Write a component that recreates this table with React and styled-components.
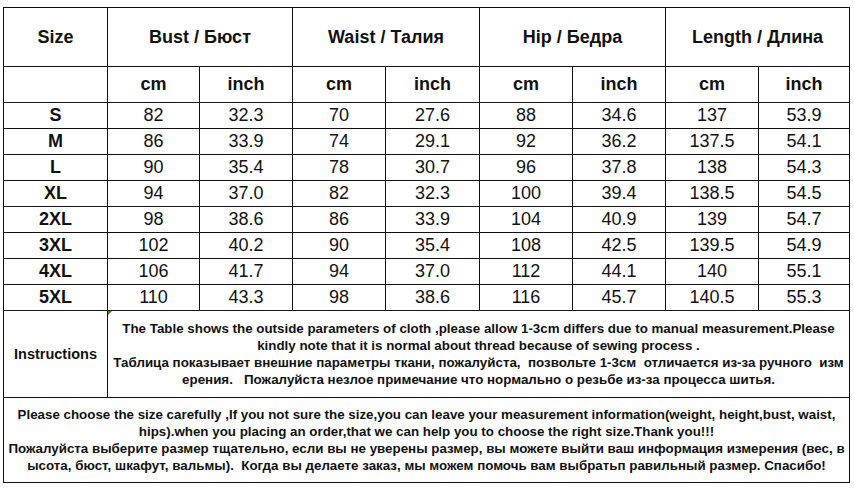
import React from "react";
import styled, { createGlobalStyle } from "styled-components";

const GlobalStyle = createGlobalStyle`
  html, body {
    margin: 0;
    padding: 0;
    background: #fff;
  }
  body {
    font-family: "Liberation Sans", Arial, sans-serif;
    color: #111;
  }
`;

const Page = styled.div`
  padding: 7px 4px 0 3px;
  width: 854px;
  box-sizing: border-box;
`;

const Chart = styled.div`
  display: grid;
  grid-template-columns: 104px 92px 93px 93px 94px 93px 93px 93px 91px;
  grid-template-rows: 59px 36px repeat(8, 26px) 87px 85px;
  border-top: 1px solid #111;
  border-left: 1px solid #111;
  width: max-content;
`;

const Cell = styled.div`
  grid-column: ${(p) => (p.$span ? `span ${p.$span}` : "auto")};
  border-right: 1px solid #111;
  border-bottom: 1px solid #111;
  display: flex;
  align-items: center;
  justify-content: center;
  position: relative;
  font-size: 18px;
  font-weight: ${(p) => (p.$bold ? 700 : 400)};
  white-space: nowrap;
  overflow: visible;
`;

const Label = styled(Cell)`
  font-size: 14.5px;
  font-weight: 700;
`;

const TextBlock = styled(Cell)`
  flex-direction: column;
  font-size: 13.35px;
  font-weight: 700;
  line-height: 17px;
  text-align: center;
`;

const Line = styled.div`
  white-space: pre;
`;

const Marker = styled.span`
  position: absolute;
  top: 0;
  left: 0;
  width: 0;
  height: 0;
  border-top: 4px solid #3a8a2a;
  border-right: 4px solid transparent;
`;

const groups = ["Bust / Бюст", "Waist / Талия", "Hip / Бедра", "Length / Длина"];

const rows = [
  ["S", "82", "32.3", "70", "27.6", "88", "34.6", "137", "53.9"],
  ["M", "86", "33.9", "74", "29.1", "92", "36.2", "137.5", "54.1"],
  ["L", "90", "35.4", "78", "30.7", "96", "37.8", "138", "54.3"],
  ["XL", "94", "37.0", "82", "32.3", "100", "39.4", "138.5", "54.5"],
  ["2XL", "98", "38.6", "86", "33.9", "104", "40.9", "139", "54.7"],
  ["3XL", "102", "40.2", "90", "35.4", "108", "42.5", "139.5", "54.9"],
  ["4XL", "106", "41.7", "94", "37.0", "112", "44.1", "140", "55.1"],
  ["5XL", "110", "43.3", "98", "38.6", "116", "45.7", "140.5", "55.3"],
];

const instructions = [
  "The Table shows the outside parameters of cloth ,please allow 1-3cm differs due to manual measurement.Please",
  "kindly note that it is normal about thread because of sewing process .",
  "Таблица показывает внешние параметры ткани, пожалуйста,  позвольте 1-3см  отличается из-за ручного  изм",
  "ерения.   Пожалуйста незлое примечание что нормально о резьбе из-за процесса шитья.",
];

const notes = [
  "Please choose the size carefully ,If you not sure the size,you can leave your measurement information(weight, height,bust, waist,",
  "hips).when you placing an order,that we can help you to choose the right size.Thank you!!!",
  "Пожалуйста выберите размер тщательно, если вы не уверены размер, вы можете выйти ваш информация измерения (вес, в",
  "ысота, бюст, шкафут, вальмы).  Когда вы делаете заказ, мы можем помочь вам выбратьп равильный размер. Спасибо!",
];

export default function App() {
  return (
    <Page>
      <GlobalStyle />
      <Chart>
        <Cell $bold>Size</Cell>
        {groups.map((g) => (
          <Cell $bold $span={2} key={g}>
            {g}
          </Cell>
        ))}

        <Cell />
        {groups.map((g) => (
          <React.Fragment key={g + "-u"}>
            <Cell $bold>cm</Cell>
            <Cell $bold>inch</Cell>
          </React.Fragment>
        ))}

        {rows.map((r) =>
          r.map((v, i) => (
            <Cell $bold={i === 0} key={r[0] + i}>
              {v}
            </Cell>
          ))
        )}

        <Label>Instructions</Label>
        <TextBlock $span={8}>
          <Marker />
          {instructions.map((l) => (
            <Line key={l}>{l}</Line>
          ))}
        </TextBlock>

        <TextBlock $span={9}>
          {notes.map((l) => (
            <Line key={l}>{l}</Line>
          ))}
        </TextBlock>
      </Chart>
    </Page>
  );
}
